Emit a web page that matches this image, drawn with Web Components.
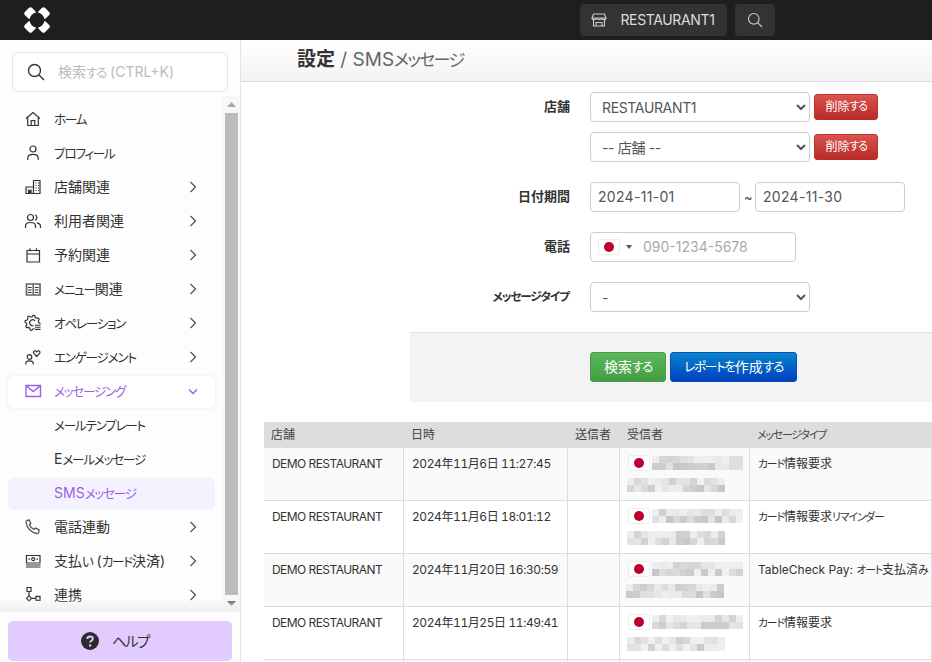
<!DOCTYPE html>
<html lang="ja"><head><meta charset="utf-8">
<style>
html,body{margin:0;height:100%;overflow:hidden}
body{font:14px/1.4 Inter,"Noto Sans CJK JP",sans-serif;color:#333;background:#fff}
.k{font-size:.9em;letter-spacing:-.1em;font-feature-settings:"palt"}
</style></head><body>
<x-app>
  <x-topbar slot="top"></x-topbar>
  <x-sidebar slot="side">
    <x-nav icon="home">ホーム</x-nav>
    <x-nav icon="user">プロフィール</x-nav>
    <x-nav icon="store" more>店舗関連</x-nav>
    <x-nav icon="users" more>利用者関連</x-nav>
    <x-nav icon="cal" more>予約関連</x-nav>
    <x-nav icon="book" more>メニュー関連</x-nav>
    <x-nav icon="gear" more>オペレーション</x-nav>
    <x-nav icon="heart" more>エンゲージメント</x-nav>
    <x-nav icon="mail" open>メッセージング</x-nav>
    <x-nav sub>メールテンプレート</x-nav>
    <x-nav sub>Eメールメッセージ</x-nav>
    <x-nav sub current>SMSメッセージ</x-nav>
    <x-nav icon="phone" more>電話連動</x-nav>
    <x-nav icon="pay" more>支払い (カード決済)</x-nav>
    <x-nav icon="link" more>連携</x-nav>
  </x-sidebar>
  <x-title slot="main"><b>設定</b> / SMSメッセージ</x-title>
  <x-form slot="main">
    <x-field label="店舗">
      <x-control-row><x-select value="RESTAURANT1"></x-select><x-btn kind="red" small>削除する</x-btn></x-control-row>
      <x-control-row><x-select value="-- 店舗 --"></x-select><x-btn kind="red" small>削除する</x-btn></x-control-row>
    </x-field>
    <x-field label="日付期間">
      <x-control-row tilde><x-input>2024-11-01</x-input><span>~</span><x-input>2024-11-30</x-input></x-control-row>
    </x-field>
    <x-field label="電話"><x-phone>090-1234-5678</x-phone></x-field>
    <x-field label="メッセージタイプ"><x-select value="-"></x-select></x-field>
    <x-actions slot="actions"><x-btn kind="green">検索する</x-btn><x-btn kind="blue">レポートを作成する</x-btn></x-actions>
  </x-form>
  <x-sms-table slot="main"></x-sms-table>
</x-app>
<script>
const kana=s=>s.replace(/[\u3040-\u30ff]+/g,m=>`<span class="k">${m}</span>`);
const KS='.k{font-size:.9em;letter-spacing:-.1em;font-feature-settings:"palt"}';
(function wrap(n){[...n.childNodes].forEach(c=>{
  if(c.nodeType===3&&/[\u3040-\u30ff]/.test(c.data)){const t=document.createElement('template');t.innerHTML=kana(c.data);c.replaceWith(t.content)}
  else if(c.nodeType===1&&c.tagName!=='SCRIPT'&&c.tagName!=='STYLE')wrap(c)})})(document.body);

const gearPts=(()=>{let p=[];for(let i=0;i<32;i++){const a=i/32*Math.PI*2+.1,r=(i%4<2)?7.6:6;p.push((8.5+r*Math.cos(a)).toFixed(2)+','+(8.8+r*Math.sin(a)).toFixed(2))}return p.join(' ')})();
const S=(p,extra='')=>`<svg width="18" height="18" viewBox="0 0 18 18" fill="none" stroke="currentColor" stroke-width="1.200" ${extra}>${p}</svg>`;
const ICONS={
 home:'<path d="M2 8.500 9 2.500l7 6M3.700 7.300V15.500h10.600V7.300M7.200 15.500v-4.800h3.600v4.800"/>',
 user:'<circle cx="9" cy="5" r="3"/><path d="M3.800 16v-2c0-2.400 2-3.600 5.200-3.600s5.200 1.200 5.200 3.600v2"/>',
 store:'<path d="M9.500 15.500V2.500h6.500v13H2V9h7.500"/><path d="M4 15.500v-3.500h3v3.500z" fill="currentColor" stroke="none"/><path d="M3.500 12h4v3.500" stroke="#777"/><path d="M11.500 5h1M14 5h1M11.500 7.500h1M14 7.500h1M11.500 10h1M14 10h1M11.500 12.500h1M14 12.500h1" stroke-width="1.100"/>',
 users:'<circle cx="6.500" cy="5.500" r="3"/><path d="M1.500 16v-2c0-2.300 2-3.500 5-3.500s5 1.200 5 3.500v2M11 2.700a3 3 0 0 1 0 5.600M13 10.800c2 .5 3.500 1.500 3.500 3.300v1.900"/>',
 cal:'<path d="M3 4.500h12.500V16H3zM3 8h12.500M6 2.200v3M12.500 2.200v3"/>',
 book:'<path d="M2.500 4h13.500v11H2.500z" stroke="#666" stroke-width="1.700"/><path d="M9.200 4v11" stroke="#666" stroke-width="1.500"/><path d="M4 7.500h3.700M4 10h3.700M4 12.500h3.700M10.800 7.500h3.700M10.800 10h3.700M10.800 12.500h3.700" stroke-width="1"/>',
 gear:`<polygon points="${gearPts}" stroke-linejoin="round"/><path d="M11 6.800a3 3 0 1 0-1.500 4.800"/><rect x="10.300" y="10" width="8" height="8" fill="#fdfdfd" stroke="none"/><path d="M11 11.200h5.500M11 13.300h5.500M11 15.400h5.500" stroke-width="1.100"/>`,
 heart:'<circle cx="5.500" cy="9" r="2.300"/><path d="M1.800 16.500v-1.300c0-1.500 1.500-2.400 3.700-2.400s3.700.9 3.700 2.400v1.300M12.700 8.500 9.800 5.400c-1-1.200.1-2.900 1.500-2.500.6.100 1 .5 1.400 1 .4-.5.800-.9 1.400-1 1.400-.4 2.500 1.300 1.500 2.500z"/>',
 mail:'<path d="M2 3.500h14.500v11H2zM2.500 4l6.700 5.500L16 4" stroke-width="1.400"/>',
 phone:'<path d="M2.800 2.500 5.200 2l1.600 3.300-1.300 1.400c.8 2 2.300 3.800 4.500 4.700l1.500-1.300 3.700 1.700-.5 2.600c-.2.800-1 1.300-2 1.100C7.500 14.700 2.800 10 2 4.500c-.1-1 .1-1.700.8-2z" stroke="#555" stroke-width="1.300"/>',
 pay:'<path d="M2.500 3.500h13.500v7.500H2.500zM2 13h14.500M2 15h14.500"/><path d="M4.500 7.200h1.500M12.500 7.200h1.500"/><circle cx="9.200" cy="7.200" r="1.500"/>',
 link:'<path d="M3 1.500h4v4H3zM5 5.500v4.200M5 9.700l2.500 2.700L5 15l-2.500-2.600zM7.500 12.400h4.500M12 10.400h4v4h-4z"/>'
};
const chev=(d,c='currentColor')=>`<svg width="8" height="12" viewBox="0 0 8 12" fill="none" stroke="${c}" stroke-width="1.300">${d==='r'?'<path d="M1.500 1 6.500 6l-5 5"/>':'<path d="M-1 3.500 4 8.500l5-5" />'}</svg>`;
function def(name,render,after){
  customElements.define(name,class extends HTMLElement{
    constructor(){super();this.attachShadow({mode:'open'})}
    connectedCallback(){this.shadowRoot.innerHTML=render(this);if(after)after(this)}
  });
}
def('x-app',()=>`<style>:host{display:grid;grid-template:40px 622px/241px 691px;height:662px;overflow:hidden}
 .t{grid-column:1/3}.m{overflow:hidden}</style>
 <div class="t"><slot name="top"></slot></div><slot name="side"></slot><div class="m"><slot name="main"></slot></div>`);
def('x-topbar',()=>`<style>:host{display:flex;height:40px;background:#1e1e1e;align-items:center;padding:0 157px 0 24px;box-sizing:border-box;color:#d8d8d8;gap:8px}
 .logo{margin-right:auto;display:block}.b{height:32px;background:#333;border-radius:4px;display:flex;align-items:center;justify-content:center;color:#ddd}
 .s{width:147px;gap:13px;font-size:14px;letter-spacing:-.35px;padding-right:1px;box-sizing:border-box}.q{width:40px}${KS}</style>
 <svg class="logo" width="26" height="26" viewBox="0 0 26 26"><g fill="#fff"><rect x="1.500" y="1.500" width="10" height="10" rx="2" transform="rotate(45 6.500 6.500)"/><rect x="14.500" y="1.500" width="10" height="10" rx="2" transform="rotate(45 19.500 6.500)"/><rect x="1.500" y="14.500" width="10" height="10" rx="2" transform="rotate(45 6.500 19.500)"/><rect x="14.500" y="14.500" width="10" height="10" rx="2" transform="rotate(45 19.500 19.500)"/></g><circle cx="13" cy="13" r="7.400" fill="#1e1e1e"/><path d="M13 0v6M13 20v6M0 13h6M20 13h6" stroke="#1e1e1e" stroke-width="2.400"/></svg>
 <div class="b s"><svg width="16" height="16" viewBox="0 0 16 16" fill="none" stroke="#ccc" stroke-width="1.100"><path d="M2.500 2h11l1.500 4H1zM1 6c0 2.200 4.500 2.200 4.700 0 .2 2.200 4.400 2.200 4.600 0 .2 2.200 4.700 2.200 4.700 0M2.500 8v6h11V8M5 14v-3.500h6V14"/></svg><span>RESTAURANT1</span></div>
 <div class="b q"><svg width="16" height="16" viewBox="0 0 16 16" fill="none" stroke="#ccc" stroke-width="1.100"><circle cx="6.800" cy="6.800" r="5.300"/><path d="m10.700 10.700 4.300 4.300"/></svg></div>`);
def('x-sidebar',()=>`<style>:host{display:flex;flex-direction:column;height:622px;border-right:1px solid #e4e4e4;background:#fdfdfd;box-sizing:border-box;width:241px;position:relative}
 .search{margin:12px 12px 4px;height:40px;box-sizing:border-box;border:1.500px solid #e6e6e6;border-radius:6px;display:flex;align-items:center;padding-left:14px;gap:13px;color:#bbb;background:#fff;flex:none}
 .search svg{color:#333}.wrap{display:flex;height:516px;flex:none;position:relative}
 .menu{flex:1;overflow:hidden;padding:6px 8px 0;min-width:0;display:flex;flex-direction:column}
 .bar{width:17px;background:#f8f8f8;display:flex;flex-direction:column;align-items:center;flex:none}
 .ar{height:17px;display:flex;align-items:center;justify-content:center;flex:none}.th{flex:1;width:13px;background:#bcbcbc}
 .fade{position:absolute;left:0;right:0;bottom:0;height:14px;background:linear-gradient(#fff0,#eee);pointer-events:none}
 .help{flex:1;border-top:0;padding:9px 8px 0;box-sizing:border-box}
 .hb{height:40px;background:#e2ccff;border-radius:5px;display:flex;align-items:center;justify-content:center;gap:13px;font-size:16px;color:#333;padding-right:10px;box-sizing:border-box}
 ${KS}</style>
 <div class="search"><svg width="18" height="18" viewBox="0 0 18 18" fill="none" stroke="currentColor" stroke-width="1.400"><circle cx="7.500" cy="7.500" r="6"/><path d="m12 12 5 5"/></svg><span>${kana('検索する (CTRL+K)')}</span></div>
 <div class="wrap"><div class="menu"><slot></slot></div>
 <div class="bar"><div class="ar"><svg width="9" height="5"><path d="M4.500 0 9 5H0z" fill="#a8a8a8"/></svg></div><div class="th"></div><div class="ar"><svg width="9" height="5"><path d="M0 0h9L4.500 5z" fill="#505050"/></svg></div></div>
 <div class="fade"></div></div>
 <div class="help"><div class="hb"><svg width="18" height="18" viewBox="0 0 18 18"><circle cx="9" cy="9" r="9" fill="#2b2b2b"/><path d="M6.300 7c.1-1.700 1.300-2.500 2.800-2.500s2.700.9 2.700 2.300c0 2-2.700 2-2.700 3.800" fill="none" stroke="#e2ccff" stroke-width="1.900"/><circle cx="9.100" cy="13.500" r="1.200" fill="#e2ccff"/></svg><span>${kana('ヘルプ')}</span></div></div>`);
def('x-nav',e=>{
 const open=e.hasAttribute('open'),sub=e.hasAttribute('sub'),cur=e.hasAttribute('current');
 const ic=e.getAttribute('icon');
 return `<style>:host{display:block;flex:none;height:34px}
 .r{height:32px;margin:2px 0 0;display:flex;align-items:center;border-radius:6px;padding:0 0 2px 16px;box-sizing:border-box;color:${open||cur?'#9a5ee8':'#333'};
 ${open?'background:#fff;box-shadow:0 0 3px #0000001c;':''}${cur?'background:#f5f2ff;':''}}
 .i{width:18px;height:18px;margin-right:12px;flex:none;display:block;${sub?'visibility:hidden':''}}.i svg{display:block}
 .tx{flex:1;white-space:nowrap}.c{width:8px;margin-right:18px;display:flex;color:#555}</style>
 <div class="r"><span class="i">${ic?S(ICONS[ic]):''}</span><span class="tx"><slot></slot></span>
 ${e.hasAttribute('more')?`<span class="c">${chev('r')}</span>`:open?`<span class="c">${chev('d','#9a5ee8')}</span>`:''}</div>`});
def('x-title',()=>`<style>:host{display:block;height:42px;box-sizing:border-box;border-bottom:1px solid #ddd;background:linear-gradient(#fff,#f3f3f3);padding-left:56px;font-size:19px;line-height:40px;color:#666;white-space:nowrap}
 ::slotted(b){color:#333}</style><slot></slot>`);
def('x-form',()=>`<style>:host{display:block;padding-top:10px}.a{margin:0 0 0 169px;padding:19px 0 20px 180px;background:#f3f3f3;border-top:1px solid #e2e2e2}</style>
 <slot></slot><div class="a"><slot name="actions"></slot></div>`);
def('x-field',e=>`<style>:host{display:grid;grid-template-columns:329px 1fr;column-gap:20px;margin-bottom:20px}
 label{text-align:right;font-weight:700;font-size:13px;color:#333;line-height:28px}
 .c{display:flex;flex-direction:column;gap:10px}${KS}.k:last-child{margin-right:.1em}</style>
 <label>${kana(e.getAttribute('label'))}</label><div class="c"><slot></slot></div>`);
def('x-control-row',()=>`<style>:host{display:flex;align-items:center;gap:4px}::slotted(span){color:#444;font-size:13px;width:7px;text-align:center}</style><slot></slot>`);
def('x-select',e=>`<style>:host{display:block;width:220px;height:30px;flex:none}
 select{width:100%;height:100%;font:14px Inter,"Noto Sans CJK JP",sans-serif;letter-spacing:-.35px;color:#555;background:#fff;border:1px solid #ccc;border-radius:4px;padding:0 7px;box-sizing:border-box;outline:0;margin:0}</style>
 <select><option>${e.getAttribute('value')}</option></select>`);
def('x-input',()=>`<style>:host{display:block;width:150px;height:30px;box-sizing:border-box;border:1px solid #ccc;border-radius:4px;padding:0 7px;line-height:28px;color:#555;background:#fff;letter-spacing:.3px}</style><slot></slot>`);
const FLAG='<span class="flag"><i></i></span>';
const FLAGS='.flag{display:inline-flex;flex:none;width:22px;height:16px;box-sizing:border-box;background:#fff;border:1px solid #ececec;border-radius:2px;align-items:center;justify-content:center}.flag i{width:10px;height:10px;border-radius:50%;background:#bc002d}';
def('x-phone',()=>`<style>:host{display:flex;align-items:center;width:206px;height:30px;box-sizing:border-box;border:1px solid #ccc;border-radius:4px;padding-left:7px;color:#aaa;background:#fff}
 ${FLAGS}.car{margin:0 11px 0 6px;width:0;height:0;border:3px solid transparent;border-top:4px solid #555;border-bottom:0}</style>${FLAG}<span class="car"></span><slot></slot>`);
def('x-btn',e=>{
 const c={red:['#d9534f','#b92c28','#c12e2a'],green:['#5cb85c','#449d44','#4a9a4a'],blue:['#0a84cc','#0040c0','#0550bb']}[e.getAttribute('kind')];
 const sm=e.hasAttribute('small');
 return `<style>:host{display:block;flex:none}
 .b{height:${sm?26:30}px;padding:0 ${sm?10.5:13}px;box-sizing:border-box;display:flex;align-items:center;color:#fff;font-size:${sm?12:14}px;border:1px solid ${c[2]};border-radius:3px;background:linear-gradient(${c[0]},${c[1]});white-space:nowrap}</style><div class="b"><slot></slot></div>`});
def('x-actions',()=>`<style>:host{display:flex;gap:4px}</style><slot></slot>`);
def('x-mosaic',e=>{
 let s=+e.getAttribute('seed');const r=()=>(s=(s*16807)%2147483647)/2147483647;
 const cols=+e.getAttribute('cols')||13;let q='';
 for(let y=0;y<2;y++)for(let x=0;x<cols;x++){const v=r();const g=Math.round(y===0&&v<.16?238:198+v*44);
  q+=`<rect x="${x*7}" y="${y*7}" width="7" height="7" fill="rgb(${g},${g},${g+2})"/>`}
 return `<style>:host{display:block;line-height:0;flex:none}svg{display:block;filter:blur(.4px)}</style><svg width="${cols*7}" height="14" shape-rendering="crispEdges">${q}</svg>`});
const ROWS=[['2024年11月6日 11:27:45','カード情報要求',[3,0,-1,1]],['2024年11月6日 18:01:12','カード情報要求リマインダー',[17,-1,-1,0]],['2024年11月20日 16:30:59','TableCheck Pay: オート支払済み',[29,-1,-2,0]],['2024年11月25日 11:49:41','カード情報要求',[41,0,-1,-1]]];
def('x-sms-table',()=>`<style>:host{display:block;margin:20px 0 0 23px;font-size:12px;color:#333}
 table{border-collapse:separate;border-spacing:0;table-layout:fixed;width:668px}
 th{background:#ddd;height:26px;padding:0 8px 0 7px;text-align:left;font-weight:400;color:#444;box-sizing:border-box}
 td{height:53px;box-sizing:border-box;padding:8px 8px;vertical-align:top;border-bottom:1px solid #ddd;border-right:1px solid #ddd;line-height:16px;white-space:nowrap}
 td.rcv{padding-top:7px}.nm{letter-spacing:-.55px}.dt{font-variant-numeric:tabular-nums;letter-spacing:-.42px}
 tr:nth-child(odd) td{background:#fafafa}
 .rc{display:flex;flex-direction:column}.l{display:flex;align-items:center;gap:2px}.l2{margin-top:7px}
 ${FLAGS}${KS}</style>
 <table><colgroup><col style="width:140px"><col style="width:164px"><col style="width:52px"><col style="width:130px"><col style="width:182px"></colgroup>
 <thead><tr><th>${kana('店舗')}</th><th>${kana('日時')}</th><th>${kana('送信者')}</th><th>${kana('受信者')}</th><th>${kana('メッセージタイプ')}</th></tr></thead>
 <tbody>${ROWS.map(r=>`<tr><td class="nm">DEMO RESTAURANT</td><td class="dt">${r[0]}</td><td></td><td class="rcv"><div class="rc"><div class="l">${FLAG}<x-mosaic seed="${r[2][0]}"></x-mosaic></div><x-mosaic class="l2" style="margin-left:${r[2][2]}px" seed="${r[2][0]*7+5}" cols="14"></x-mosaic></div></td><td>${kana(r[1])}</td></tr>`).join('')}
 <tr><td></td><td></td><td></td><td></td><td></td></tr></tbody></table>`);
</script>
</body></html>
